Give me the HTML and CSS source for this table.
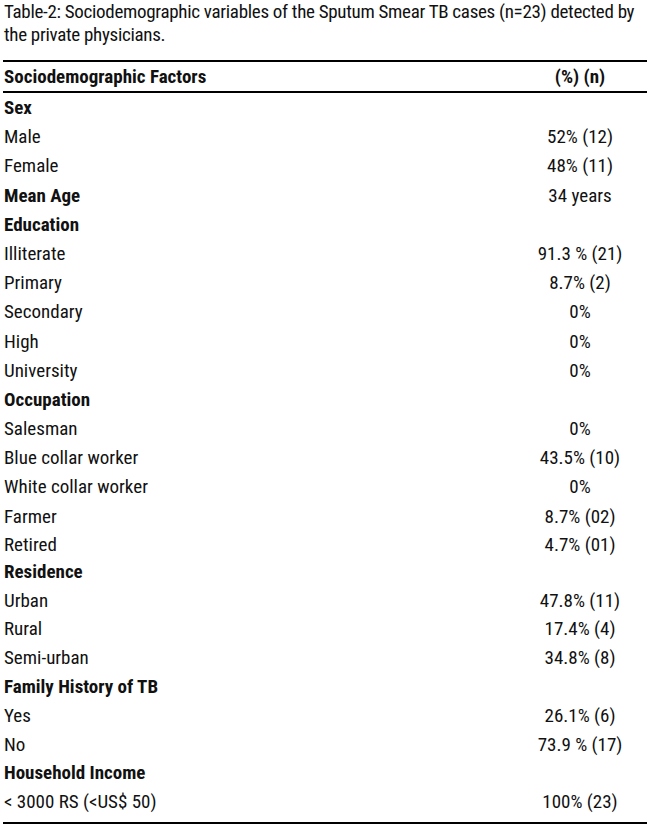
FILE: index.html
```html
<!DOCTYPE html>
<html lang="en">
<head>
<meta charset="utf-8">
<title>Table-2</title>
<link rel="stylesheet" href="styles.css">
</head>
<body>
<div class="page">
  <p class="caption">Table-2: Sociodemographic variables of the Sputum Smear TB cases (n=23) detected by the private physicians.</p>
  <div class="table">
    <div class="row head"><span class="label">Sociodemographic Factors</span><span class="val">(%) (n)</span></div>
    <div class="body">
      <div class="row group"><span class="label">Sex</span><span class="val"></span></div>
      <div class="row"><span class="label">Male</span><span class="val">52% (12)</span></div>
      <div class="row"><span class="label">Female</span><span class="val">48% (11)</span></div>
      <div class="row group"><span class="label">Mean Age</span><span class="val reg">34 years</span></div>
      <div class="row group"><span class="label">Education</span><span class="val"></span></div>
      <div class="row"><span class="label">Illiterate</span><span class="val">91.3 % (21)</span></div>
      <div class="row"><span class="label">Primary</span><span class="val">8.7% (2)</span></div>
      <div class="row"><span class="label">Secondary</span><span class="val">0%</span></div>
      <div class="row"><span class="label">High</span><span class="val">0%</span></div>
      <div class="row"><span class="label">University</span><span class="val">0%</span></div>
      <div class="row group"><span class="label">Occupation</span><span class="val"></span></div>
      <div class="row"><span class="label">Salesman</span><span class="val">0%</span></div>
      <div class="row"><span class="label">Blue collar worker</span><span class="val">43.5% (10)</span></div>
      <div class="row"><span class="label">White collar worker</span><span class="val">0%</span></div>
      <div class="row"><span class="label">Farmer</span><span class="val">8.7% (02)</span></div>
      <div class="row tight"><span class="label">Retired</span><span class="val">4.7% (01)</span></div>
    </div>
    <div class="body lower">
      <div class="row group"><span class="label">Residence</span><span class="val"></span></div>
      <div class="row"><span class="label">Urban</span><span class="val">47.8% (11)</span></div>
      <div class="row"><span class="label">Rural</span><span class="val">17.4% (4)</span></div>
      <div class="row"><span class="label">Semi-urban</span><span class="val">34.8% (8)</span></div>
      <div class="row group"><span class="label">Family History of TB</span><span class="val"></span></div>
      <div class="row"><span class="label">Yes</span><span class="val">26.1% (6)</span></div>
      <div class="row"><span class="label">No</span><span class="val">73.9 % (17)</span></div>
      <div class="row group"><span class="label">Household Income</span><span class="val"></span></div>
      <div class="row"><span class="label">&lt; 3000 RS (&lt;US$ 50)</span><span class="val">100% (23)</span></div>
    </div>
  </div>
</div>
</body>
</html>
```
FILE: styles.css
```css
html, body {
  margin: 0;
  padding: 0;
  background: #ffffff;
}
.page {
  width: 650px;
  color: #111111;
  font-family: "Roboto Condensed", "Liberation Sans", sans-serif;
  font-size: 19px;
}
.caption {
  margin: 0 0 14px 0;
  padding: 0 1px 0 4px;
  line-height: 23px;
  letter-spacing: -0.3px;
}
.table {
  margin: 0 3px 0 3px;
  padding-bottom: 5px;
  border-top: 2px solid #000;
  border-bottom: 2px solid #000;
}
.row {
  display: flex;
  align-items: center;
  height: 29.2px;
  line-height: 29.2px;
}
.lower .row {
  height: 28.8px;
  line-height: 28.8px;
}
.row.tight {
  height: 27px;
  line-height: 27px;
}
.head {
  height: 29px;
  line-height: 28px;
  border-bottom: 2px solid #000;
  font-weight: bold;
}
.label {
  flex: 1;
  padding-left: 1px;
  white-space: nowrap;
}
.val {
  width: 134px;
  text-align: center;
  white-space: nowrap;
}
.group .label {
  font-weight: bold;
}
.reg {
  font-weight: normal;
}
```
